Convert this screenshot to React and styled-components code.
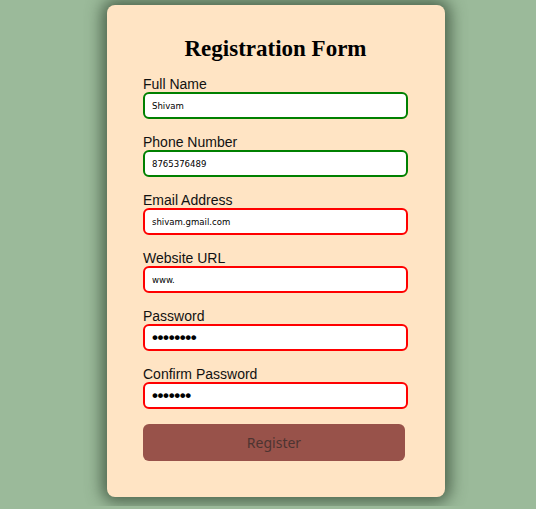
import React from 'react'
import styled, { createGlobalStyle } from 'styled-components'

const GlobalStyle = createGlobalStyle`
  html, body {
    margin: 0;
    padding: 0;
    background: #9bba9a;
  }
  body {
    font-family: 'Liberation Sans', Arial, sans-serif;
  }
`;

const Page = styled.div`
  width: 536px;
  height: 506px;
  background: #9bba9a;
  box-sizing: border-box;
  padding: 5px 0 0 107px;
`;

const Card = styled.form`
  width: 338px;
  height: 492px;
  box-sizing: border-box;
  background: #ffe4c4;
  border-radius: 8px;
  box-shadow: 0 0 16px 5px rgba(40, 60, 40, 0.7);
  padding: 30px 37px 0 36px;
  display: flex;
  flex-direction: column;
`;

const Title = styled.h1`
  margin: 0 0 13px;
  text-align: center;
  font-family: 'Liberation Serif', 'Times New Roman', serif;
  font-weight: bold;
  font-size: 23px;
  line-height: 28px;
  color: #000;
`;

const Field = styled.div`
  display: flex;
  flex-direction: column;
  margin-bottom: 15px;
`;

const Label = styled.label`
  font-size: 14px;
  line-height: 16px;
  color: #111;
`;

const Input = styled.input`
  width: 265px;
  height: 27px;
  box-sizing: border-box;
  border: 2px solid ${p => (p.$valid ? '#008000' : '#ff0000')};
  border-radius: 6px;
  background: #fff;
  padding: 0 7px;
  font-family: ${p => (p.type === 'password' ? "'Liberation Sans', sans-serif" : "'DejaVu Sans Condensed', 'DejaVu Sans', sans-serif")};
  font-size: ${p => (p.type === 'password' ? '17px' : '9.5px')};
  font-weight: ${p => (p.type === 'password' ? 'bold' : 'normal')};
  letter-spacing: ${p => (p.type === 'password' ? '-0.4px' : '0')};
  color: #000;
  outline: none;
`;

const Button = styled.button`
  width: 262px;
  height: 37px;
  border: none;
  border-radius: 6px;
  background: #98524a;
  color: #4d3431;
  font-family: 'Noto Sans', 'DejaVu Sans', sans-serif;
  font-size: 14px;
  cursor: not-allowed;
`;

const fields = [
  { label: 'Full Name', value: 'Shivam', type: 'text', valid: true },
  { label: 'Phone Number', value: '8765376489', type: 'text', valid: true },
  { label: 'Email Address', value: 'shivam.gmail.com', type: 'text', valid: false },
  { label: 'Website URL', value: 'www.', type: 'text', valid: false },
  { label: 'Password', value: 'password', type: 'password', valid: false },
  { label: 'Confirm Password', value: 'passwor', type: 'password', valid: false },
];

export default function App() {
  return (
    <Page>
      <GlobalStyle />
      <Card onSubmit={e => e.preventDefault()}>
        <Title>Registration Form</Title>
        {fields.map(f => (
          <Field key={f.label}>
            <Label>{f.label}</Label>
            <Input type={f.type} defaultValue={f.value} $valid={f.valid} readOnly />
          </Field>
        ))}
        <Button type="submit" disabled>Register</Button>
      </Card>
    </Page>
  );
}
